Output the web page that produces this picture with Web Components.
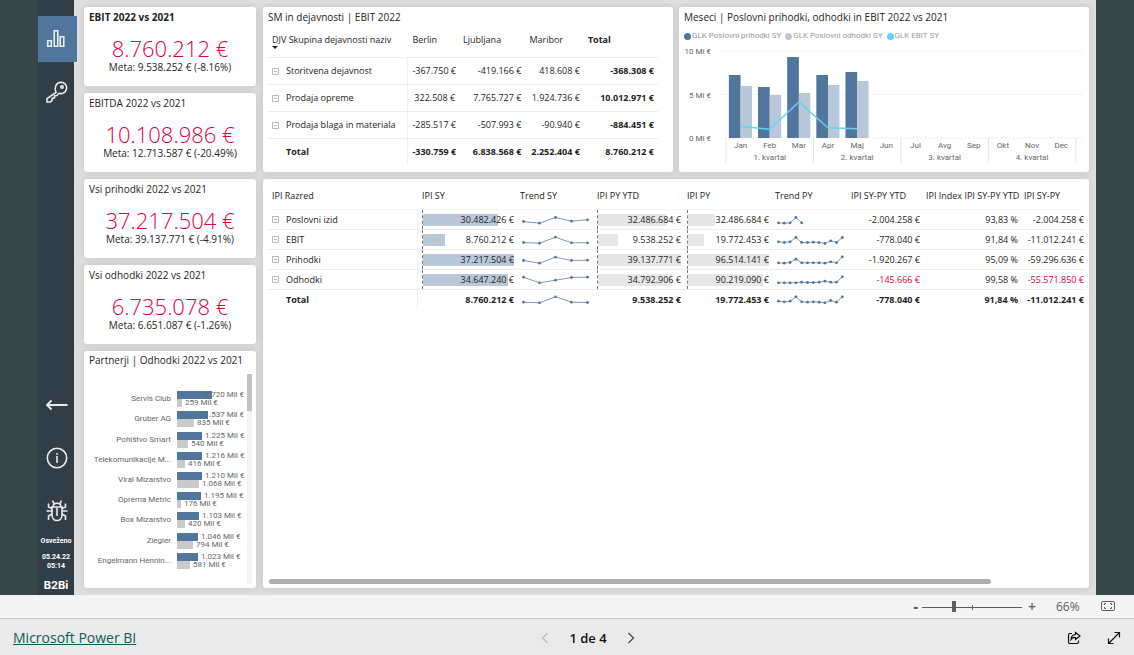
<!DOCTYPE html>
<html lang="sl">
<head>
<meta charset="utf-8">
<title>EBIT 2022 vs 2021</title>
<style>
html, body { margin: 0; min-height: 100%; }
body { font-family: "Open Sans", "Noto Sans", sans-serif; color: #252423; background: #eaeaea; }
</style>
</head>
<body>
<report-app></report-app>

<template id="t-app">
  <style>
    :host { display: flex; flex-direction: column; min-height: 100vh; }
    main { flex: 1; display: flex; padding: 0 38px; background: #374649; }
    .canvas { flex: 1; min-width: 0; display: flex; gap: 7px; padding: 7px 7px 7px 10px; background: #dedede; }
    .kpis { width: 172px; flex: none; display: flex; flex-direction: column; gap: 7px; }
    .kpis partner-chart { flex: 1; }
    .wide { flex: 1; min-width: 0; display: grid; grid-template-columns: minmax(0, 1fr) minmax(0, 1fr); grid-template-rows: auto 1fr; gap: 7px 6px; }
    .full { grid-column: 1 / -1; }
  </style>
  <main>
    <side-nav></side-nav>
    <div class="canvas">
      <div class="kpis">
        <kpi-card><b slot="title">EBIT 2022 vs 2021</b><span slot="value">8.760.212 €</span><span slot="goal">Meta: 9.538.252 € (-8.16%)</span></kpi-card>
        <kpi-card><span slot="title">EBITDA 2022 vs 2021</span><span slot="value">10.108.986 €</span><span slot="goal">Meta: 12.713.587 € (-20.49%)</span></kpi-card>
        <kpi-card><span slot="title">Vsi prihodki 2022 vs 2021</span><span slot="value">37.217.504 €</span><span slot="goal">Meta: 39.137.771 € (-4.91%)</span></kpi-card>
        <kpi-card><span slot="title">Vsi odhodki 2022 vs 2021</span><span slot="value">6.735.078 €</span><span slot="goal">Meta: 6.651.087 € (-1.26%)</span></kpi-card>
        <partner-chart></partner-chart>
      </div>
      <div class="wide">
        <report-card><span slot="title">SM in dejavnosti | EBIT 2022</span><activity-table></activity-table></report-card>
        <report-card><span slot="title">Meseci | Poslovni prihodki, odhodki in EBIT 2022 vs 2021</span><month-chart></month-chart></report-card>
        <report-card class="full" plain><class-table></class-table></report-card>
      </div>
    </div>
  </main>
  <zoom-bar></zoom-bar>
  <page-bar></page-bar>
</template>

<template id="t-card">
  <style>
    :host { display: flex; flex-direction: column; min-width: 0; background: #fff; border-radius: 3px; box-shadow: 0 0 7px rgba(0,0,0,.12); }
    h2 { margin: 0; padding: 3px 5px; font-size: 10px; line-height: 14px; font-weight: 400; white-space: nowrap; }
    :host([plain]) h2 { display: none; }
  </style>
  <h2><slot name="title"></slot></h2>
  <slot></slot>
</template>

<template id="t-kpi">
  <style>
    :host { display: block; background: #fff; border-radius: 3px; box-shadow: 0 0 7px rgba(0,0,0,.12); padding-bottom: 12px; }
    h2 { margin: 0; padding: 3px 5px; font-size: 10px; line-height: 14px; font-weight: 400; white-space: nowrap; }
    p { margin: 0; text-align: center; white-space: nowrap; }
    .value { margin-top: 9px; font-size: 22px; line-height: 24px; font-weight: 300; color: #e00040; }
    .goal { font-size: 10px; line-height: 14px; }
  </style>
  <h2><slot name="title"></slot></h2>
  <p class="value"><slot name="value"></slot></p>
  <p class="goal"><slot name="goal"></slot></p>
</template>

<template id="t-nav">
  <style>
    :host { display: flex; flex-direction: column; align-items: center; width: 36px; flex: none; background: #323e47; color: #fff; text-align: center; }
    button { display: grid; place-items: center; box-sizing: border-box; width: 36px; border: 0; padding: 0 0 0 2px; background: none; }
    .on { position: relative; margin-top: 16px; height: 46px; width: 39px; padding: 0 4px 0 0; align-self: flex-start; background: #50769d; }
    .key { height: 60px; }
    .tools { margin-top: auto; }
    .tools button { height: 53px; }
    p { margin: 0; font-family: Roboto, sans-serif; font-size: 7px; line-height: 9px; font-weight: 700; white-space: nowrap; }
    .when { margin: 7px 0; }
    .logo { font: 700 11px/14px Inter, "Liberation Sans", sans-serif; margin-bottom: 3px; }
    svg { display: block; fill: none; stroke: #e8ecee; stroke-width: 1.6; }
  </style>
  <button class="on" aria-label="Pregled"><svg width="20" height="20"><path d="M1.700 11.700h3.600v5.600h-3.600zM8.200 1.700h3.600v15.600h-3.600zM14.200 7.700h3.600v9.600h-3.600z"/></svg></button>
  <button class="key" aria-label="Ključ"><svg width="24" height="24"><path d="M11 12.500C8.800 8 11 2.500 16 2.300c3.500 0 6.200 3 5.600 6.300-.8 4-4.300 5.700-7.700 4.700l-2 2.200-2.200.2-.2 2.200-2.200.3-.3 2.300-1.700 1.500H2v-3.400z"/><circle cx="17" cy="7" r="1.200"/></svg></button>
  <div class="tools">
    <button aria-label="Nazaj"><svg width="24" height="24"><path d="M22.500 12H2M6.500 7.500 2 12l4.500 4.500" stroke-width="1.800"/></svg></button>
    <button aria-label="Informacije"><svg width="24" height="24"><circle cx="12" cy="12" r="9.700"/><path d="M12 10v7M12 7v1.700"/></svg></button>
    <button aria-label="Prijavi napako"><svg width="24" height="24"><path d="M7 8h10v8c0 3-2 5.500-5 5.500S7 19 7 16zM12 9v8M8 8c0-5 8-5 8 0M9 4.500 7.500 1.700M15 4.500l1.500-2.800M7 12H1.500M17 12h5.500M7 9.500 3.500 8V4.500M17 9.500 20.500 8V4.500M7 15l-3.500 2v4M17 15l3.500 2v4"/></svg></button>
  </div>
  <p>Osveženo</p>
  <p class="when">05.24.22<br>05:14</p>
  <p class="logo">B2Bi</p>
</template>

<template id="t-partner">
  <style>
    :host { display: flex; flex-direction: column; background: #fff; border-radius: 3px; box-shadow: 0 0 7px rgba(0,0,0,.12); }
    h2 { margin: 0; padding: 2px 5px 3px; font-size: 10px; line-height: 14px; font-weight: 400; white-space: nowrap; }
    .body { flex: 1; display: flex; margin: 4px 4px 4px 5px; gap: 3px; }
    ul { flex: 1; min-width: 0; display: grid; grid-auto-rows: 1fr; list-style: none; margin: 15px 0 13px; padding: 0; font-family: Roboto, sans-serif; font-size: 8px; color: #666; }
    li { display: grid; grid-template-columns: 82px minmax(0, 1fr); column-gap: 6px; align-items: center; white-space: nowrap; }
    .name { text-align: right; line-height: 12px; }
    .line { display: grid; height: 8px; line-height: 8px; align-items: center; }
    .line > * { grid-area: 1 / 1; }
    .line i { height: 8px; background: #50769d; }
    .line.b i { background: #cacaca; }
    .line span { justify-self: start; }
    .line.cap span { justify-self: end; }
    .track { width: 5px; flex: none; background: #f3f3f3; }
    .thumb { height: 37px; background: #c2c2c2; }
  </style>
  <h2>Partnerji | Odhodki 2022 vs 2021</h2>
  <div class="body"><ul></ul><div class="track"><div class="thumb"></div></div></div>
</template>

<template id="t-activity">
  <style>
    :host { display: block; padding: 0 15px 7px 5px; font-size: 9px; }
    table { width: 100%; table-layout: fixed; border-spacing: 0; white-space: nowrap; line-height: 12px; }
    th, td { box-sizing: border-box; padding: 0 4px; height: 27px; border-bottom: 1px solid #ededed; }
    thead th { height: 31px; text-align: left; font-weight: 400; padding-bottom: 5px; }
    tbody th { text-align: left; font-weight: 400; border-right: 1px solid #f0f0f0; }
    td { text-align: right; }
    .total td, .total th { height: 26px; border-bottom: 0; }
    thead th:last-child, td:last-child, .total td, .total th { font-weight: 700; }
    .total th { padding-left: 18px; }
    tree-box { margin-right: 6px; }
    .sort { position: relative; }
    .sort::after { content: ""; position: absolute; left: 0; top: 13px; border: 3px solid transparent; border-top-color: #252423; border-bottom: 0; }
  </style>
  <table>
    <colgroup><col style="width:36%"><col style="width:13%"><col style="width:17%"><col style="width:15%"><col style="width:19%"></colgroup>
    <thead><tr><th><span class="sort">DJV Skupina dejavnosti naziv</span></th><th>Berlin</th><th>Ljubljana</th><th>Maribor</th><th>Total</th></tr></thead>
    <tbody>
      <tr><th><tree-box></tree-box>Storitvena dejavnost</th><td>-367.750 €</td><td>-419.166 €</td><td>418.608 €</td><td>-368.308 €</td></tr>
      <tr><th><tree-box></tree-box>Prodaja opreme</th><td>322.508 €</td><td>7.765.727 €</td><td>1.924.736 €</td><td>10.012.971 €</td></tr>
      <tr><th><tree-box></tree-box>Prodaja blaga in materiala</th><td>-285.517 €</td><td>-507.993 €</td><td>-90.940 €</td><td>-884.451 €</td></tr>
      <tr class="total"><th>Total</th><td>-330.759 €</td><td>6.838.568 €</td><td>2.252.404 €</td><td>8.760.212 €</td></tr>
    </tbody>
  </table>
</template>

<template id="t-class">
  <style>
    :host { display: flex; flex: 1; flex-direction: column; justify-content: space-between; padding: 3px 5px 4px; font-size: 9px; }
    table { width: 100%; table-layout: fixed; border-spacing: 0; white-space: nowrap; line-height: 12px; }
    th, td { box-sizing: border-box; padding: 0 2px 0 4px; height: 20px; border-bottom: 1px solid #ededed; }
    thead th { height: 28px; text-align: left; font-weight: 400; border-color: #f6f6f6; }
    tbody th { text-align: left; font-weight: 400; border-right: 1px solid #f0f0f0; }
    td { text-align: right; }
    td:last-child { padding-right: 0; }
    .total td, .total th { font-weight: 700; border-bottom: 0; }
    .total th { padding-left: 18px; }
    .neg { color: #e00040; }
    tree-box { margin-right: 6px; }
    .scroll { width: 723px; max-width: 88.500%; height: 5px; margin-left: 1px; border-radius: 3px; background: #aeaeac; }
  </style>
  <table>
    <thead><tr></tr></thead>
    <tbody></tbody>
  </table>
  <div class="scroll"></div>
</template>

<template id="t-month">
  <style>
    :host { display: block; padding: 1px 4px 0; font-size: 8px; font-family: Roboto, sans-serif; }
    ul { display: flex; gap: 4px; margin: 0; padding: 0 0 0 1px; list-style: none; line-height: 16px; color: #999; white-space: nowrap; }
    li { display: flex; align-items: center; gap: 1px; }
    i { width: 7px; height: 7px; border-radius: 50%; background: var(--c); }
    svg { display: block; width: 100%; }
    text { fill: #666; font-size: 8px; }
    .m { text-anchor: middle; }
    .e { text-anchor: end; }
  </style>
  <ul>
    <li style="--c:#50769d"><i></i>GLK Poslovni prihodki SY</li>
    <li style="--c:#b8c8d8"><i></i>GLK Poslovni odhodki SY</li>
    <li style="--c:#5fd3f8"><i></i>GLK EBIT SY</li>
  </ul>
  <svg viewBox="0 0 402 122" role="img" aria-label="Prihodki, odhodki in EBIT po mesecih"></svg>
</template>

<template id="t-zoom">
  <style>
    :host { display: flex; justify-content: flex-end; align-items: center; height: 23px; padding-right: 18px; background: #f4f4f4; border-bottom: 1px solid #c8c8c8; color: #605e5c; }
    button { border: 0; padding: 0; background: none; color: inherit; font: 600 14px/20px "Open Sans", sans-serif; }
    .minus { font-weight: 800; }
    input { appearance: none; width: 100px; height: 12px; margin: 0 6px 0 4px; background: linear-gradient(#605e5c, #605e5c) 0 6px / 100% 1px no-repeat, linear-gradient(#605e5c, #605e5c) 50px 4px / 1px 5px no-repeat; }
    input::-webkit-slider-thumb { appearance: none; width: 4px; height: 11px; background: #605e5c; }
    output { width: 24px; margin: 0 21px 0 20px; font-size: 12px; line-height: 16px; }
    svg { display: block; fill: none; stroke: #605e5c; }
  </style>
  <button class="minus" aria-label="Pomanjšaj">-</button>
  <input type="range" min="0" max="100" value="31" aria-label="Povečava">
  <button aria-label="Povečaj">+</button>
  <output>66%</output>
  <button aria-label="Prilagodi strani"><svg width="15" height="11"><rect x=".5" y=".5" width="13" height="9" rx="1.500"/><path d="M5 2.500H3.500v1.500M3.500 6v1.500H5M9 2.500h1.500v1.500M10.500 6v1.500H9"/></svg></button>
</template>

<template id="t-page">
  <style>
    :host { display: grid; grid-template-columns: 1fr auto 1fr; align-items: center; box-sizing: border-box; height: 36px; padding: 2px 13px 0; background: #eaeaea; color: #111; font-size: 14px; line-height: 20px; }
    a { justify-self: start; color: #0e5c57; }
    nav { display: flex; align-items: center; gap: 20px; padding-left: 42px; font-size: 13px; font-weight: 600; }
    .icons { justify-self: end; display: flex; gap: 26px; }
    button { border: 0; padding: 0; background: none; }
    svg { display: block; fill: none; stroke: #111; stroke-width: 1.200; }
  </style>
  <a href="#">Microsoft Power BI</a>
  <nav aria-label="Strani"><button disabled aria-label="Prejšnja"><svg width="8" height="12"><path d="M6.500 1 1.500 6l5 5" stroke="#bbb"/></svg></button><span>1 de 4</span><button aria-label="Naslednja"><svg width="8" height="12"><path d="m1.500 1 5 5-5 5" stroke="#444"/></svg></button></nav>
  <div class="icons">
    <button aria-label="Skupna raba"><svg width="14" height="14"><path d="M5 2.500H3a1.500 1.500 0 0 0-1.500 1.500v7A1.500 1.500 0 0 0 3 12.500h7a1.500 1.500 0 0 0 1.500-1.500V9.500M8.500 1.500 13 5 8.500 8.500v-2C6.500 6.300 5 7 4 8.500c.2-3 1.700-4.800 4.500-5z"/></svg></button>
    <button aria-label="Celozaslonski način"><svg width="14" height="14"><path d="M1.500 12.500l11-11M7.500 1.500h5v5M1.500 7.500v5h5"/></svg></button>
  </div>
</template>

<script>
class Base extends HTMLElement {
  constructor() {
    super();
    const root = this.attachShadow({ mode: 'open' });
    const t = document.getElementById(this.constructor.template);
    if (t) root.append(t.content.cloneNode(true));
  }
}
const define = (name, template) => customElements.define(name, class extends Base { static template = template; });

class TreeBox extends HTMLElement {
  constructor() {
    super();
    this.attachShadow({ mode: 'open' }).innerHTML = `<style>:host{display:inline-block;vertical-align:middle;width:8px;height:8px}svg{display:block;fill:none;stroke:#bbb}</style>
      <svg width="8" height="8"><path d="M.5.5h6v6h-6zM2 3.500h3"/></svg>`;
  }
}
customElements.define('tree-box', TreeBox);

class DataBar extends HTMLElement {
  connectedCallback() {
    if (this.shadowRoot) return;
    this.attachShadow({ mode: 'open' }).innerHTML = `<style>
      :host{display:grid;height:19px;align-items:center;border-left:1px dashed #777}
      i,span{grid-area:1/1} i{height:12px;background:${this.getAttribute('tone')};width:${this.getAttribute('part')}%}
      span{position:relative;text-align:right}</style><i></i><span><slot></slot></span>`;
  }
}
customElements.define('data-bar', DataBar);

class SparkLine extends HTMLElement {
  connectedCallback() {
    if (this.shadowRoot) return;
    const step = +this.getAttribute('step');
    const pts = this.getAttribute('points').split(' ').map((y, i) => [3.5 + i * step, +y + .5]);
    this.attachShadow({ mode: 'open' }).innerHTML = `<style>:host{display:block}svg{display:block}</style>
      <svg width="70" height="14"><polyline fill="none" stroke="#7d9ab8" points="${pts.map(p => p.join()).join(' ')}"/>
      ${pts.map(([x, y]) => `<circle cx="${x}" cy="${y}" r="1.400" fill="#50769d"/>`).join('')}</svg>`;
  }
}
customElements.define('spark-line', SparkLine);

class PartnerChart extends Base {
  static template = 't-partner';
  connectedCallback() {
    const rows = [
      ['Servis Club', 35, '1.720', 5, '259', 1], ['Gruber AG', 31, '1.537', 17, '835', 1],
      ['Pohištvo Smart', 25, '1.225', 11, '540'], ['Telekomunikacije M...', 25, '1.216', 8, '416'],
      ['Viral Mizarstvo', 25, '1.210', 22, '1.068'], ['Oprema Metric', 24, '1.195', 4, '176'],
      ['Box Mizarstvo', 22, '1.103', 8, '420'], ['Ziegler', 21, '1.046', 16, '794'],
      ['Engelmann Hennin...', 21, '1.023', 13, '581']];
    const line = (cls, w, v) => `<div class="line ${cls}"><i style="width:${w}px"></i><span style="padding-left:${cls === 'cap' ? 0 : w + 3}px">${v} Mil €</span></div>`;
    this.shadowRoot.querySelector('ul').innerHTML = rows.map(([n, a, av, b, bv, cap]) =>
      `<li><span class="name">${n}</span><div>${line(cap ? 'cap' : '', a, av)}${line('b', b, bv)}</div></li>`).join('');
  }
}
customElements.define('partner-chart', PartnerChart);

class ClassTable extends Base {
  static template = 't-class';
  connectedCallback() {
    const cols = [['IPI Razred', 150], ['IPI SY', 98], ['Trend SY', 77], ['IPI PY YTD', 90], ['IPI PY', 88], ['Trend PY', 76], ['IPI SY-PY YTD', 75], ['IPI Index IPI SY-PY YTD', 98], ['IPI SY-PY', 64]];
    const rows = [
      ['Poslovni izid', '30.482.426', 82, '8 9.7 4 7.7 6.3', '32.486.684', 83, '32.486.684', 33, '9.3 9.7 9.3 4 9.3', '-2.004.258', '93,83', '-2.004.258'],
      ['EBIT', '8.760.212', 24, '9 9.7 3.7 9.3 9.3', '9.538.252', 24, '19.772.453', 20, '8.3 9 8.3 4 9 9 8.7 9 10 7.3 9 4', '-778.040', '91,84', '-11.012.241'],
      ['Prihodki', '37.217.504', 100, '7 9.7 3.7 7 6.7', '39.137.771', 100, '96.514.141', 100, '9.3 9.7 9 5.7 9.3 9.3 9.3 9.3 9.7 8.3 9.3 3.3', '-1.920.267', '95,09', '-59.296.636'],
      ['Odhodki', '34.647.240', 93, '3.7 9.3 6.7 4 3.7', '34.792.906', 89, '90.219.090', 93, '9.3 9.3 9.3 9.3 8.7 9 9 8.7 7.7 8.7 8.7 3.3', '-145.666', '99,58', '-55.571.850'],
      ['Total', '8.760.212', 0, '8.7 9.3 3.3 8.7 9', '9.538.252', 0, '19.772.453', 0, '7.7 8.3 7.7 3.3 8.3 8.7 8.3 8.7 9.3 7 8.7 3.3', '-778.040', '91,84', '-11.012.241']];
    const bar = (v, part, tone) => part ? `<td><data-bar part="${part}" tone="${tone}">${v} €</data-bar></td>` : `<td>${v} €</td>`;
    const root = this.shadowRoot;
    root.querySelector('thead tr').innerHTML = cols.map(([n, w]) => `<th style="width:${w}px">${n}</th>`).join('');
    root.querySelector('tbody').innerHTML = rows.map(r => {
      const total = r[0] === 'Total', neg = r[0] === 'Odhodki' ? ' class="neg"' : '';
      return `<tr${total ? ' class="total"' : ''}><th>${total ? '' : '<tree-box></tree-box>'}${r[0]}</th>
        ${bar(r[1], r[2], '#b8c8d8')}<td><spark-line step="16" points="${r[3]}"></spark-line></td>
        ${bar(r[4], r[5], '#e6e6e6')}${bar(r[6], r[7], '#e6e6e6')}
        <td><spark-line step="5.8" points="${r[8]}"></spark-line></td>
        <td${neg}>${r[9]} €</td><td>${r[10]} %</td><td${neg}>${r[11]} €</td></tr>`;
    }).join('');
  }
}
customElements.define('class-table', ClassTable);

class MonthChart extends Base {
  static template = 't-month';
  connectedCallback() {
    const months = ['Jan', 'Feb', 'Mar', 'Apr', 'Maj', 'Jun', 'Jul', 'Avg', 'Sep', 'Okt', 'Nov', 'Dec'];
    const base = 94, left = 43, step = 29.15;
    const bars = [[63, 52], [51, 43], [81, 45], [63, 53], [66, 57]];
    const ebit = [11.7, 8.7, 36, 10.3, 9.3];
    const center = i => left + step * (i + .5);
    let s = '';
    [['10 Mi €', 7], ['5 Mi €', 50.5], ['0 Mi €', 94]].forEach(([t, y]) => {
      s += `<text class="e" x="28" y="${y + 3}">${t}</text><line x1="34" x2="401" y1="${y}" y2="${y}" stroke="#ddd" stroke-dasharray="1 3"/>`;
    });
    for (let q = 0; q <= 4; q++) {
      const x = left + q * step * 3;
      s += `<line x1="${x}" x2="${x}" y1="94" y2="119" stroke="#e4e4e4"/>`;
      if (q < 4) s += `<text class="m" x="${x + step * 1.5}" y="116">${q + 1}. kvartal</text>`;
    }
    bars.forEach(([a, b], i) => {
      s += `<rect x="${center(i) - 11.7}" y="${base - a}" width="11.700" height="${a}" fill="#50769d"/><rect x="${center(i)}" y="${base - b}" width="11.400" height="${b}" fill="#b8c8d8"/>`;
    });
    months.forEach((m, i) => { s += `<text class="m" x="${center(i)}" y="104">${m}</text>`; });
    s += `<polyline fill="none" stroke="#5fd3f8" stroke-width="1.400" points="${ebit.map((v, i) => center(i) + ',' + (base - v)).join(' ')}"/>`;
    this.shadowRoot.querySelector('svg').innerHTML = s;
  }
}
customElements.define('month-chart', MonthChart);

define('report-card', 't-card');
define('kpi-card', 't-kpi');
define('side-nav', 't-nav');
define('activity-table', 't-activity');
define('zoom-bar', 't-zoom');
define('page-bar', 't-page');
define('report-app', 't-app');
</script>
</body>
</html>
